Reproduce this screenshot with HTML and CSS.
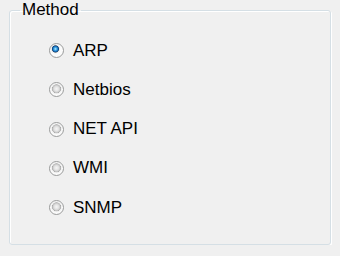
FILE: index.html
```html
<!DOCTYPE html>
<html lang="en">

<head>
    <meta charset="UTF-8">
    <title>Method</title>
    <link rel="stylesheet" href="styles.css">
</head>

<body>

    <fieldset class="group">
        <legend>Method</legend>

        <div class="options">
            <label class="option">
                <input type="radio" name="method" value="arp" checked>
                <span>ARP</span>
            </label>
            <label class="option">
                <input type="radio" name="method" value="netbios">
                <span>Netbios</span>
            </label>
            <label class="option">
                <input type="radio" name="method" value="netapi">
                <span>NET API</span>
            </label>
            <label class="option">
                <input type="radio" name="method" value="wmi">
                <span>WMI</span>
            </label>
            <label class="option">
                <input type="radio" name="method" value="snmp">
                <span>SNMP</span>
            </label>
        </div>
    </fieldset>

</body>

</html>
```

FILE: styles.css
```css
* {
    box-sizing: border-box;
}

body {
    font-family: 'Liberation Sans', Arial, sans-serif;
    font-size: 17px;
    background: #f0f0f0;
    margin: 0;
    color: #000;
}

.group {
    margin: 0 0 0 9px;
    width: 322px;
    height: 245px;
    padding: 0;
    border: 1px solid #d5dfe5;
    border-radius: 3px;
    box-shadow: inset 1px 1px 0 #fff, 1px 1px 0 #fff;
}

.group legend {
    margin-left: 10px;
    padding: 0 2px;
    line-height: normal;
}

.options {
    display: flex;
    flex-direction: column;
    padding: 11px 0 0 39px;
}

.option {
    display: flex;
    align-items: center;
    gap: 9px;
    height: 39.25px;
}

.option input {
    appearance: none;
    margin: 0;
    width: 15px;
    height: 15px;
    border-radius: 50%;
    border: 1px solid #9a9b9b;
    background:
        radial-gradient(circle closest-side at 50% 45%, #f6f6f6 0, #e2e2e2 40%, #c2c2c2 66%, #a9a9a9 72%, #ececec 80%, #fbfbfb 100%);
}

.option input:checked {
    background:
        radial-gradient(circle closest-side at 42% 38%, #c4efff 0, #4bb1ea 26%, #1d78c6 48%, #0b4580 64%, #6f7c88 71%, #e6eaee 80%, #fbfbfb 100%);
}
```
